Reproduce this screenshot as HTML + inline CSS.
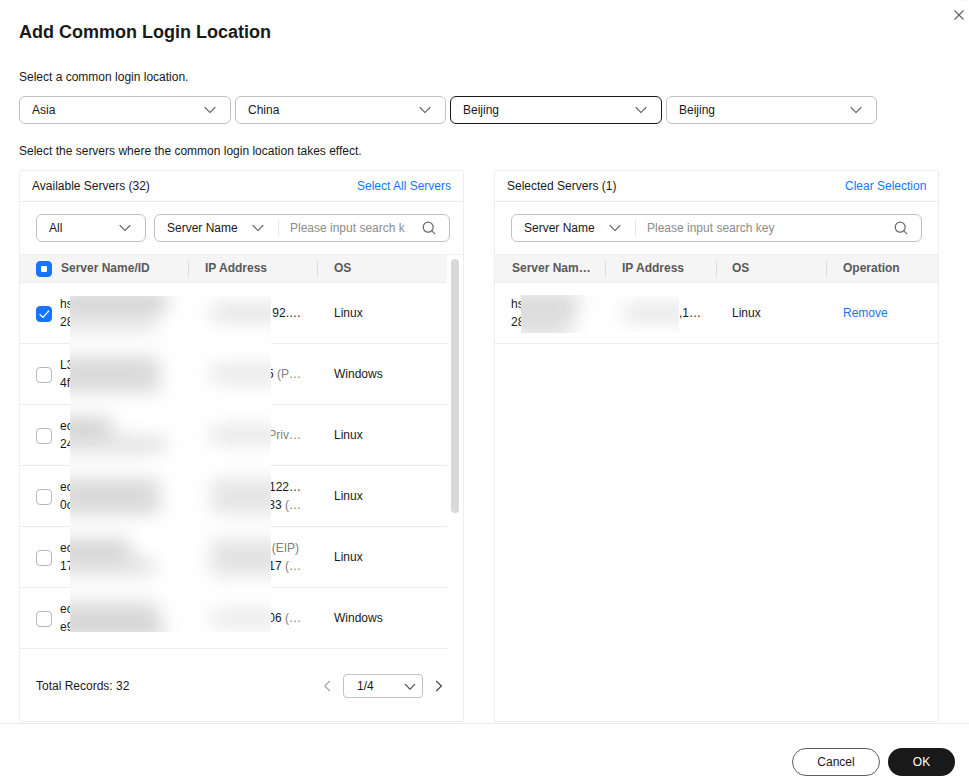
<!DOCTYPE html>
<html><head><meta charset="utf-8">
<style>
*{box-sizing:border-box;margin:0;padding:0}
html,body{width:969px;height:781px;background:#fff;overflow:hidden}
body{font-family:"Liberation Sans",Arial,sans-serif;font-size:12px;color:#191919;position:relative}
.abs{position:absolute}
.title{left:19px;top:21px;font-size:18px;font-weight:700;line-height:22px;color:#191919;white-space:nowrap}
.t{white-space:nowrap;line-height:14px}
.sel{height:28px;border:1px solid #c2c2c2;border-radius:6px;background:#fff;line-height:26px;padding-left:12px;white-space:nowrap}
.sel.focus{border-color:#191919}
.chev{position:absolute;top:9px;width:12px;height:8px}
.panel{border:1px solid #eeeeee;background:#fff;border-radius:2px}
.link{color:#1476ff}
.th{font-weight:700;color:#595959}
.hl{background:#dcdcdc}
.ph{color:#8c8c8c}
.cb{width:16px;height:16px;border:1px solid #b8b8b8;border-radius:4px;background:#fff}
.cb.on{background:#1476ff;border-color:#1476ff}
.sub{color:#808080}
.redact{background:#fff;overflow:hidden}
.bl{position:absolute;display:block;filter:blur(10px);border-radius:5px}
</style></head><body>

<div class="abs" style="left:960px;top:0;width:8px;height:1px;background:#f8f8fa"></div>
<!-- close -->
<svg class="abs" style="left:953px;top:9px" width="12" height="12" viewBox="0 0 12 12"><path d="M1.5 1.5L10.5 10.5M10.5 1.5L1.5 10.5" stroke="#5e5e5e" stroke-width="1.1" fill="none"/></svg>

<div class="abs title">Add Common Login Location</div>
<div class="abs t" style="left:19px;top:70px">Select a common login location.</div>

<div class="abs sel" style="left:19px;top:96px;width:212px">Asia<svg class="chev" style="right:14px" viewBox="0 0 12 8"><path d="M0.7 1.2L6 6.5L11.3 1.2" stroke="#505050" stroke-width="1.05" fill="none"/></svg></div>
<div class="abs sel" style="left:235px;top:96px;width:211px">China<svg class="chev" style="right:14px" viewBox="0 0 12 8"><path d="M0.7 1.2L6 6.5L11.3 1.2" stroke="#505050" stroke-width="1.05" fill="none"/></svg></div>
<div class="abs sel focus" style="left:450px;top:96px;width:212px">Beijing<svg class="chev" style="right:14px" viewBox="0 0 12 8"><path d="M0.7 1.2L6 6.5L11.3 1.2" stroke="#505050" stroke-width="1.05" fill="none"/></svg></div>
<div class="abs sel" style="left:666px;top:96px;width:211px">Beijing<svg class="chev" style="right:14px" viewBox="0 0 12 8"><path d="M0.7 1.2L6 6.5L11.3 1.2" stroke="#505050" stroke-width="1.05" fill="none"/></svg></div>

<div class="abs t" style="left:19px;top:144px">Select the servers where the common login location takes effect.</div>

<!-- LEFT PANEL -->
<div class="abs panel" style="left:19px;top:170px;width:445px;height:552px"></div>
<div class="abs" style="left:20px;top:201px;width:443px;height:1px;background:#ebebeb"></div>
<div class="abs t" style="left:32px;top:179px">Available Servers (32)</div>
<div class="abs t link" style="left:357px;top:179px">Select All Servers</div>

<div class="abs sel" style="left:36px;top:214px;width:110px">All<svg class="chev" style="right:14px" viewBox="0 0 12 8"><path d="M0.7 1.2L6 6.5L11.3 1.2" stroke="#505050" stroke-width="1.05" fill="none"/></svg></div>
<div class="abs sel" style="left:154px;top:214px;width:296px">Server Name<svg class="chev" style="left:97px" viewBox="0 0 12 8"><path d="M0.7 1.2L6 6.5L11.3 1.2" stroke="#505050" stroke-width="1.05" fill="none"/></svg>
  <span class="abs" style="left:123px;top:5px;width:1px;height:16px;background:#e6e6e6"></span>
  <span class="abs ph" style="left:135px;top:0">Please input search k</span>
  <svg class="abs" style="left:267px;top:6px" width="14" height="14" viewBox="0 0 14 14"><circle cx="6.2" cy="6.2" r="5" stroke="#6b6b6b" stroke-width="1.25" fill="none"/><path d="M9.9 9.9L13.1 13.1" stroke="#6b6b6b" stroke-width="1.25"/></svg>
</div>

<!-- left table header -->
<div class="abs" style="left:20px;top:254px;width:443px;height:1px;background:#f0f0f0"></div>
<div class="abs" style="left:20px;top:255px;width:427px;height:28px;background:#f5f5f5;border-bottom:1px solid #efefef"></div>
<div class="abs cb on" style="left:36px;top:261px"><span class="abs" style="left:4px;top:4px;width:6px;height:6px;background:#fff;border-radius:1px"></span></div>
<div class="abs t th" style="left:61px;top:261px">Server Name/ID</div>
<div class="abs hl" style="left:188px;top:261px;width:1px;height:16px"></div>
<div class="abs t th" style="left:205px;top:261px">IP Address</div>
<div class="abs hl" style="left:317px;top:261px;width:1px;height:16px"></div>
<div class="abs t th" style="left:334px;top:261px">OS</div>

<!-- scrollbar -->
<div class="abs" style="left:451px;top:259px;width:8px;height:254px;background:#d9d9d9;border-radius:4px"></div>

<!-- rows -->
<div class="abs cb on" style="left:36px;top:306px"><svg class="abs" style="left:-1px;top:-1px" width="16" height="16" viewBox="0 0 16 16"><path d="M3.6 8.1L7 11.4L12.9 4.7" stroke="#fff" stroke-width="1.3" fill="none"/></svg></div>
<div class="abs t" style="left:60px;top:297px">hs</div>
<div class="abs t" style="left:60px;top:315px">28</div>
<div class="abs t ip" style="right:668px;top:306px">92.…</div>
<div class="abs t" style="left:334px;top:306px">Linux</div>
<div class="abs" style="left:20px;top:343px;width:427px;height:1px;background:#ebebeb"></div>
<div class="abs cb" style="left:36px;top:367px"></div>
<div class="abs t" style="left:60px;top:358px">L3</div>
<div class="abs t" style="left:60px;top:376px">4f</div>
<div class="abs t ip" style="right:668px;top:367px">5 <span class="sub">(P…</span></div>
<div class="abs t" style="left:334px;top:367px">Windows</div>
<div class="abs" style="left:20px;top:404px;width:427px;height:1px;background:#ebebeb"></div>
<div class="abs cb" style="left:36px;top:428px"></div>
<div class="abs t" style="left:60px;top:419px">ec</div>
<div class="abs t" style="left:60px;top:437px">24</div>
<div class="abs t ip" style="right:668px;top:428px"><span class="sub">Priv…</span></div>
<div class="abs t" style="left:334px;top:428px">Linux</div>
<div class="abs" style="left:20px;top:465px;width:427px;height:1px;background:#ebebeb"></div>
<div class="abs cb" style="left:36px;top:489px"></div>
<div class="abs t" style="left:60px;top:480px">ec</div>
<div class="abs t" style="left:60px;top:498px">0c</div>
<div class="abs t ip" style="right:668px;top:480px">122…</div>
<div class="abs t ip" style="right:668px;top:498px">33 <span class="sub">(…</span></div>
<div class="abs t" style="left:334px;top:489px">Linux</div>
<div class="abs" style="left:20px;top:526px;width:427px;height:1px;background:#ebebeb"></div>
<div class="abs cb" style="left:36px;top:550px"></div>
<div class="abs t" style="left:60px;top:541px">ec</div>
<div class="abs t" style="left:60px;top:559px">17</div>
<div class="abs t ip" style="right:670px;top:541px"><span class="sub">(EIP)</span></div>
<div class="abs t ip" style="right:668px;top:559px">17 <span class="sub">(…</span></div>
<div class="abs t" style="left:334px;top:550px">Linux</div>
<div class="abs" style="left:20px;top:587px;width:427px;height:1px;background:#ebebeb"></div>
<div class="abs cb" style="left:36px;top:611px"></div>
<div class="abs t" style="left:60px;top:602px">ec</div>
<div class="abs t" style="left:60px;top:620px">e9</div>
<div class="abs t ip" style="right:668px;top:611px">06 <span class="sub">(…</span></div>
<div class="abs t" style="left:334px;top:611px">Windows</div>
<div class="abs" style="left:20px;top:648px;width:427px;height:1px;background:#ebebeb"></div>
<!-- redaction blur, left -->
<div class="abs redact" style="left:70px;top:296px;width:201px;height:336px">
<i class="bl" style="left:-15px;top:0px;width:113px;height:11px;background:rgba(0,0,0,0.32)"></i>
<i class="bl" style="left:-15px;top:21px;width:103px;height:11px;background:rgba(0,0,0,0.18)"></i>
<i class="bl" style="left:140px;top:11px;width:75px;height:12px;background:rgba(0,0,0,0.16)"></i>
<i class="bl" style="left:-15px;top:64px;width:105px;height:11px;background:rgba(0,0,0,0.25)"></i>
<i class="bl" style="left:-15px;top:82px;width:105px;height:11px;background:rgba(0,0,0,0.25)"></i>
<i class="bl" style="left:140px;top:72px;width:75px;height:12px;background:rgba(0,0,0,0.15)"></i>
<i class="bl" style="left:-15px;top:125px;width:57px;height:11px;background:rgba(0,0,0,0.3)"></i>
<i class="bl" style="left:-15px;top:143px;width:111px;height:11px;background:rgba(0,0,0,0.19)"></i>
<i class="bl" style="left:140px;top:133px;width:75px;height:12px;background:rgba(0,0,0,0.15)"></i>
<i class="bl" style="left:-15px;top:186px;width:105px;height:11px;background:rgba(0,0,0,0.25)"></i>
<i class="bl" style="left:-15px;top:204px;width:105px;height:11px;background:rgba(0,0,0,0.25)"></i>
<i class="bl" style="left:140px;top:186px;width:75px;height:11px;background:rgba(0,0,0,0.17)"></i>
<i class="bl" style="left:140px;top:204px;width:75px;height:11px;background:rgba(0,0,0,0.17)"></i>
<i class="bl" style="left:-15px;top:247px;width:75px;height:11px;background:rgba(0,0,0,0.29)"></i>
<i class="bl" style="left:-15px;top:265px;width:100px;height:11px;background:rgba(0,0,0,0.2)"></i>
<i class="bl" style="left:140px;top:247px;width:75px;height:11px;background:rgba(0,0,0,0.19)"></i>
<i class="bl" style="left:140px;top:265px;width:75px;height:11px;background:rgba(0,0,0,0.19)"></i>
<i class="bl" style="left:-15px;top:308px;width:103px;height:11px;background:rgba(0,0,0,0.22)"></i>
<i class="bl" style="left:-15px;top:326px;width:109px;height:11px;background:rgba(0,0,0,0.3)"></i>
<i class="bl" style="left:140px;top:316px;width:75px;height:12px;background:rgba(0,0,0,0.13)"></i>
</div>
<!-- /rows -->

<!-- pagination -->
<div class="abs t" style="left:36px;top:679px">Total Records: 32</div>
<svg class="abs" style="left:323px;top:680px" width="8" height="12" viewBox="0 0 8 12"><path d="M6.8 1L1.8 6L6.8 11" stroke="#a3a9b5" stroke-width="1.3" fill="none"/></svg>
<div class="abs sel" style="left:343px;top:674px;width:80px;height:24px;line-height:22px;padding-left:13px;border-radius:4px">1/4<svg class="chev" style="right:6px;top:8px" viewBox="0 0 12 8"><path d="M1 1.2L6 6.2L11 1.2" stroke="#4d4d4d" stroke-width="1.2" fill="none"/></svg></div>
<svg class="abs" style="left:435px;top:680px" width="8" height="12" viewBox="0 0 8 12"><path d="M1.2 1L6.4 6L1.2 11" stroke="#4d4d4d" stroke-width="1.3" fill="none"/></svg>

<!-- RIGHT PANEL -->
<div class="abs panel" style="left:494px;top:170px;width:445px;height:552px"></div>
<div class="abs" style="left:495px;top:201px;width:443px;height:1px;background:#ebebeb"></div>
<div class="abs t" style="left:507px;top:179px">Selected Servers (1)</div>
<div class="abs t link" style="left:845px;top:179px">Clear Selection</div>

<div class="abs sel" style="left:511px;top:214px;width:411px">Server Name<svg class="chev" style="left:97px" viewBox="0 0 12 8"><path d="M0.7 1.2L6 6.5L11.3 1.2" stroke="#505050" stroke-width="1.05" fill="none"/></svg>
  <span class="abs" style="left:123px;top:5px;width:1px;height:16px;background:#e6e6e6"></span>
  <span class="abs ph" style="left:135px;top:0">Please input search key</span>
  <svg class="abs" style="left:382px;top:6px" width="14" height="14" viewBox="0 0 14 14"><circle cx="6.2" cy="6.2" r="5" stroke="#6b6b6b" stroke-width="1.25" fill="none"/><path d="M9.9 9.9L13.1 13.1" stroke="#6b6b6b" stroke-width="1.25"/></svg>
</div>

<div class="abs" style="left:495px;top:254px;width:443px;height:29px;background:#f5f5f5;border-top:1px solid #f0f0f0;border-bottom:1px solid #efefef"></div>
<div class="abs t th" style="left:512px;top:261px">Server Nam…</div>
<div class="abs hl" style="left:605px;top:261px;width:1px;height:16px"></div>
<div class="abs t th" style="left:622px;top:261px">IP Address</div>
<div class="abs hl" style="left:716px;top:261px;width:1px;height:16px"></div>
<div class="abs t th" style="left:732px;top:261px">OS</div>
<div class="abs hl" style="left:826px;top:261px;width:1px;height:16px"></div>
<div class="abs t th" style="left:843px;top:261px">Operation</div>

<div class="abs t" style="left:511px;top:297px">hs</div>
<div class="abs t" style="left:511px;top:315px">28</div>
<div class="abs t" style="left:679px;top:306px">,1…</div>
<div class="abs t" style="left:732px;top:306px">Linux</div>
<div class="abs t link" style="left:843px;top:306px">Remove</div>
<div class="abs" style="left:495px;top:343px;width:443px;height:1px;background:#ebebeb"></div>
<!-- redaction blur, right -->
<div class="abs redact" style="left:521px;top:295px;width:158px;height:38px">
<i class="bl" style="left:-20px;top:-4px;width:78px;height:22px;background:rgba(0,0,0,0.15)"></i>
<i class="bl" style="left:-20px;top:18px;width:72px;height:24px;background:rgba(0,0,0,0.13)"></i>
<i class="bl" style="left:102px;top:12px;width:70px;height:12px;background:rgba(0,0,0,0.15)"></i>
</div>


<!-- footer -->
<div class="abs" style="left:0;top:723px;width:969px;height:1px;background:#ebebeb"></div>
<div class="abs" style="left:792px;top:748px;width:88px;height:28px;border:1px solid #5e5e5e;border-radius:14px;text-align:center;line-height:26px;font-size:12px">Cancel</div>
<div class="abs" style="left:888px;top:748px;width:67px;height:28px;background:#191919;border-radius:14px;text-align:center;line-height:28px;color:#fff;font-size:12px">OK</div>

</body></html>
